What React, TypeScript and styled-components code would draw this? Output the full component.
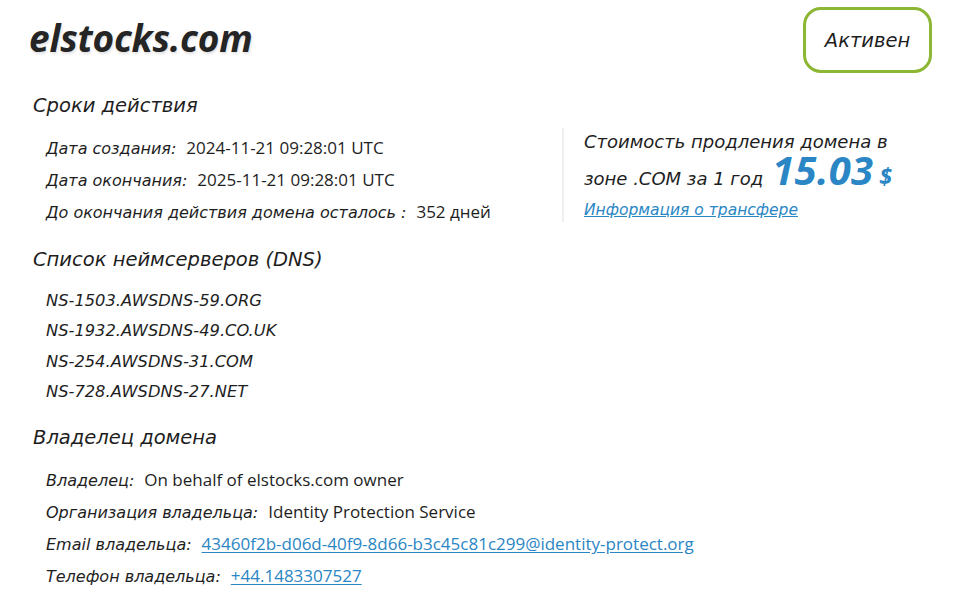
import React from "react";
import styled, { createGlobalStyle } from "styled-components";

const Global = createGlobalStyle`
  html, body { margin: 0; padding: 0; background: #fff; }
  body { font-family: "Open Sans", "Noto Sans", sans-serif; color: #1e1e1e; }
`;

const italicFont = `"DejaVu Sans", "Open Sans", sans-serif`;

const Page = styled.div`
  width: 960px;
  height: 602px;
  box-sizing: border-box;
  padding: 7px 28px 0 29px;
  overflow: hidden;
`;

const Header = styled.header`
  display: flex;
  justify-content: space-between;
  align-items: flex-start;
`;

const Title = styled.h1`
  margin: 11px 0 0 0;
  font-size: 37px;
  line-height: 40px;
  font-weight: 700;
  font-style: italic;
  color: #252525;
  letter-spacing: -0.2px;
  text-shadow: 1px 2px 3px rgba(0, 0, 0, 0.12);
`;

const Badge = styled.div`
  width: 129px;
  height: 66px;
  box-sizing: border-box;
  border: 3px solid #8cb634;
  border-radius: 18px;
  display: flex;
  align-items: center;
  justify-content: center;
  font-family: ${italicFont};
  font-style: italic;
  font-size: 19.5px;
  color: #1e1e1e;
`;

const Section = styled.section<{ $mt: number }>`
  margin-top: ${(p) => p.$mt}px;
  padding-left: 4px;
`;

const SectionTitle = styled.h2`
  margin: 0;
  font-family: ${italicFont};
  font-size: 19.5px;
  line-height: 28px;
  font-weight: 400;
  font-style: italic;
  color: #1e1e1e;
`;

const TopRow = styled.div`
  display: flex;
  align-items: flex-start;
`;

const List = styled.div<{ $gap: number; $mt: number }>`
  display: flex;
  flex-direction: column;
  gap: ${(p) => p.$gap}px;
  margin-top: ${(p) => p.$mt}px;
  padding-left: 13px;
`;

const Row = styled.div`
  font-size: 17px;
  line-height: 22px;
  white-space: nowrap;
`;

const Label = styled.span`
  font-family: ${italicFont};
  font-style: italic;
  font-size: 16px;
  margin-right: 10px;
`;

const Value = styled.span`
  color: #1e1e1e;
`;

const ValueLink = styled.a`
  color: #2a86c4;
  text-decoration: underline;
  text-underline-offset: 2px;
`;

const Ns = styled.div`
  font-family: ${italicFont};
  font-style: italic;
  font-size: 16.3px;
  line-height: 22px;
`;

const PriceBox = styled.aside`
  margin-top: 55px;
  margin-left: auto;
  width: 370px;
  height: 94px;
  box-sizing: border-box;
  border-left: 2px solid #efefef;
  padding-left: 20px;
  font-family: ${italicFont};
  font-style: italic;
  color: #1e1e1e;
`;

const PriceHeading = styled.div`
  font-size: 18px;
  line-height: 28px;
  white-space: nowrap;
`;

const PriceRow = styled.div`
  display: flex;
  align-items: baseline;
  margin-top: -6px;
  white-space: nowrap;
`;

const PriceZone = styled.span`
  font-size: 18px;
  line-height: 1;
`;

const Price = styled.span`
  font-family: "Open Sans", sans-serif;
  font-size: 40px;
  line-height: 1;
  font-weight: 700;
  color: #2a86c4;
  margin-left: 9px;
  letter-spacing: 0.3px;
`;

const Currency = styled.span`
  font-family: "Open Sans", sans-serif;
  font-size: 23px;
  line-height: 1;
  font-weight: 700;
  color: #2a86c4;
  margin-left: 6px;
`;

const TransferLink = styled.a`
  display: block;
  margin-top: 9px;
  font-size: 15.5px;
  line-height: 22px;
  color: #2a86c4;
  text-decoration: underline;
`;

export default function App() {
  return (
    <>
      <Global />
      <Page>
        <Header>
          <Title>elstocks.com</Title>
          <Badge>Активен</Badge>
        </Header>

        <TopRow>
          <Section $mt={19}>
            <SectionTitle>Сроки действия</SectionTitle>
            <List $gap={9} $mt={17}>
              <Row>
                <Label>Дата создания:</Label>
                <Value>2024-11-21 09:28:01 UTC</Value>
              </Row>
              <Row>
                <Label>Дата окончания:</Label>
                <Value>2025-11-21 09:28:01 UTC</Value>
              </Row>
              <Row>
                <Label>До окончания действия домена осталось :</Label>
                <Value>352 дней</Value>
              </Row>
            </List>
          </Section>
          <PriceBox>
            <PriceHeading>Стоимость продления домена в</PriceHeading>
            <PriceRow>
              <PriceZone>зоне .COM за 1 год</PriceZone>
              <Price>15.03</Price>
              <Currency>$</Currency>
            </PriceRow>
            <TransferLink href="#">Информация о трансфере</TransferLink>
          </PriceBox>
        </TopRow>

        <Section $mt={22}>
          <SectionTitle>Список неймсерверов (DNS)</SectionTitle>
          <List $gap={8.3} $mt={16}>
            <Ns>NS-1503.AWSDNS-59.ORG</Ns>
            <Ns>NS-1932.AWSDNS-49.CO.UK</Ns>
            <Ns>NS-254.AWSDNS-31.COM</Ns>
            <Ns>NS-728.AWSDNS-27.NET</Ns>
          </List>
        </Section>

        <Section $mt={21}>
          <SectionTitle>Владелец домена</SectionTitle>
          <List $gap={9} $mt={17}>
            <Row>
              <Label>Владелец:</Label>
              <Value>On behalf of elstocks.com owner</Value>
            </Row>
            <Row>
              <Label>Организация владельца:</Label>
              <Value>Identity Protection Service</Value>
            </Row>
            <Row>
              <Label>Email владельца:</Label>
              <ValueLink href="#">43460f2b-d06d-40f9-8d66-b3c45c81c299@identity-protect.org</ValueLink>
            </Row>
            <Row>
              <Label>Телефон владельца:</Label>
              <ValueLink href="#">+44.1483307527</ValueLink>
            </Row>
          </List>
        </Section>
      </Page>
    </>
  );
}
